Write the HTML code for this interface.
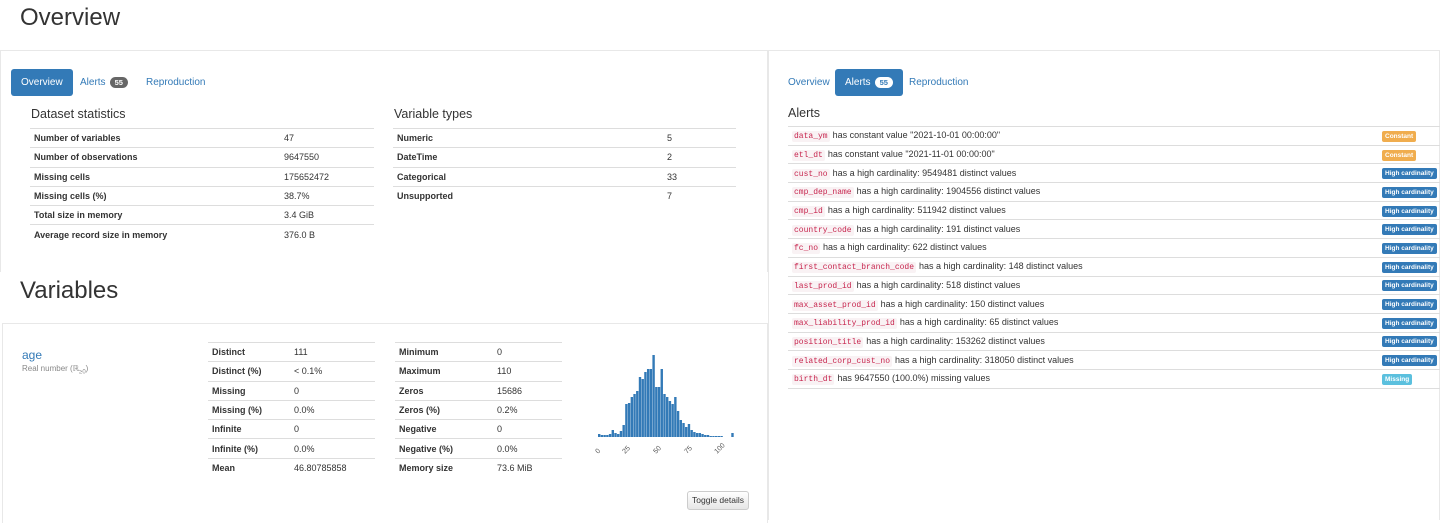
<!DOCTYPE html><html><head><meta charset="utf-8"><style>
*{margin:0;padding:0;box-sizing:border-box}
body{width:1440px;height:517px;background:#fff;font-family:"Liberation Sans",sans-serif;font-size:9.5px;color:#333;position:relative;overflow:hidden}
.a{position:absolute}
h1{position:absolute;font-weight:400;font-size:24px;color:#333}
.box{position:absolute;border:1px solid #e8e8e8;border-bottom:none}
.tab{position:absolute;height:27px;line-height:27px;font-size:10px;color:#337ab7;padding:0 10px;border-radius:3px}
.tab.on{background:#337ab7;color:#fff}
.bd{display:inline-block;background:#777;color:#fff;font-weight:700;font-size:7.5px;border-radius:8px;padding:0 5px;line-height:11px;margin-left:4px}
.on .bd{background:#fff;color:#337ab7}
h3{position:absolute;font-weight:400;font-size:12.5px;color:#333}
table{position:absolute;border-collapse:collapse}
td{border-top:1px solid #ddd;height:19.3px;padding:0 4px;font-size:9px;vertical-align:middle}
td.k{font-weight:700}
.al td{height:18.7px}
.al td.b{width:61px;padding:0 0 0 3px}
code{font-family:"Liberation Mono",monospace;font-size:8px;color:#c7254e;background:#f9f2f4;padding:1px 2px;border-radius:2px;margin-right:3px}
.lb{display:inline-block;font-size:6.5px;font-weight:700;color:#fff;padding:1px 3px;border-radius:2px;line-height:9px}
.c{background:#f0ad4e}.h{background:#337ab7}.m{background:#5bc0de}
</style></head><body>
<h1 style="left:20px;top:4px">Overview</h1>
<div class="box" style="left:0;top:50px;width:768px;height:222px"></div>
<div class="tab on" style="left:11px;top:69px">Overview</div>
<div class="tab" style="left:70px;top:69px">Alerts<span class="bd" style="background:#666">55</span></div>
<div class="tab" style="left:136px;top:69px">Reproduction</div>
<h3 style="left:31px;top:107px">Dataset statistics</h3>
<table style="left:30px;top:128px;width:344px">
<tr><td class="k" style="width:250px">Number of variables</td><td>47</td></tr>
<tr><td class="k">Number of observations</td><td>9647550</td></tr>
<tr><td class="k">Missing cells</td><td>175652472</td></tr>
<tr><td class="k">Missing cells (%)</td><td>38.7%</td></tr>
<tr><td class="k">Total size in memory</td><td>3.4 GiB</td></tr>
<tr><td class="k">Average record size in memory</td><td>376.0 B</td></tr>
</table>
<h3 style="left:394px;top:107px">Variable types</h3>
<table style="left:393px;top:128px;width:343px">
<tr><td class="k" style="width:270px">Numeric</td><td>5</td></tr>
<tr><td class="k">DateTime</td><td>2</td></tr>
<tr><td class="k">Categorical</td><td>33</td></tr>
<tr><td class="k">Unsupported</td><td>7</td></tr>
</table>
<h1 style="left:20px;top:277px">Variables</h1>
<div class="box" style="left:2px;top:323px;width:766px;height:200px"></div>
<div class="a" style="left:22px;top:348px;font-size:12px;color:#337ab7">age</div>
<div class="a" style="left:22px;top:364px;font-size:8px;color:#888">Real number (ℝ<sub style="font-size:6px">≥0</sub>)</div>
<table style="left:208px;top:342px;width:167px">
<tr><td class="k" style="width:82px">Distinct</td><td>111</td></tr>
<tr><td class="k">Distinct (%)</td><td>&lt; 0.1%</td></tr>
<tr><td class="k">Missing</td><td>0</td></tr>
<tr><td class="k">Missing (%)</td><td>0.0%</td></tr>
<tr><td class="k">Infinite</td><td>0</td></tr>
<tr><td class="k">Infinite (%)</td><td>0.0%</td></tr>
<tr><td class="k">Mean</td><td>46.80785858</td></tr>
</table>
<table style="left:395px;top:342px;width:167px">
<tr><td class="k" style="width:98px">Minimum</td><td>0</td></tr>
<tr><td class="k">Maximum</td><td>110</td></tr>
<tr><td class="k">Zeros</td><td>15686</td></tr>
<tr><td class="k">Zeros (%)</td><td>0.2%</td></tr>
<tr><td class="k">Negative</td><td>0</td></tr>
<tr><td class="k">Negative (%)</td><td>0.0%</td></tr>
<tr><td class="k">Memory size</td><td>73.6 MiB</td></tr>
</table>
<svg class="a" style="left:590px;top:350px" width="150" height="110">
<g fill="#337ab7" id="bars"></g>
<g font-size="7" fill="#555" font-family="Liberation Sans">
<text transform="translate(8,104) rotate(-45)">0</text>
<text transform="translate(35,104) rotate(-45)">25</text>
<text transform="translate(66,104) rotate(-45)">50</text>
<text transform="translate(97,104) rotate(-45)">75</text>
<text transform="translate(127,104) rotate(-45)">100</text>
</g>
</svg>
<script>
var h=[3,2,2,2,3,7,4,3,6,12,33,34,40,43,46,60,58,65,68,68,82,50,50,68,43,40,36,33,40,26,17,14,10,13,7,5,4,4,3,2,2,1,1,1,1,1,0,0,0,4];
var s='';for(var i=0;i<h.length;i++){s+='<rect x="'+(8+i*2.72)+'" y="'+(87-h[i])+'" width="2.4" height="'+h[i]+'"/>';}
document.getElementById('bars').innerHTML=s;
</script>
<div class="a" style="left:687px;top:491px;width:62px;height:19px;border:1px solid #ccc;border-radius:3px;background:linear-gradient(#fff,#e6e6e6);font-size:8.5px;line-height:17px;text-align:center">Toggle details</div>

<div class="box" style="left:768px;top:50px;width:672px;height:470px"></div>
<div class="tab" style="left:778px;top:69px">Overview</div>
<div class="tab on" style="left:835px;top:69px">Alerts<span class="bd">55</span></div>
<div class="tab" style="left:899px;top:69px">Reproduction</div>
<h3 style="left:788px;top:106px">Alerts</h3>
<table class="al" style="left:788px;top:126px;width:652px;border-bottom:1px solid #ddd">
<tr><td><code>data_ym</code>has constant value "2021-10-01 00:00:00"</td><td class="b"><span class="lb c">Constant</span></td></tr>
<tr><td><code>etl_dt</code>has constant value "2021-11-01 00:00:00"</td><td class="b"><span class="lb c">Constant</span></td></tr>
<tr><td><code>cust_no</code>has a high cardinality: 9549481 distinct values</td><td class="b"><span class="lb h">High cardinality</span></td></tr>
<tr><td><code>cmp_dep_name</code>has a high cardinality: 1904556 distinct values</td><td class="b"><span class="lb h">High cardinality</span></td></tr>
<tr><td><code>cmp_id</code>has a high cardinality: 511942 distinct values</td><td class="b"><span class="lb h">High cardinality</span></td></tr>
<tr><td><code>country_code</code>has a high cardinality: 191 distinct values</td><td class="b"><span class="lb h">High cardinality</span></td></tr>
<tr><td><code>fc_no</code>has a high cardinality: 622 distinct values</td><td class="b"><span class="lb h">High cardinality</span></td></tr>
<tr><td><code>first_contact_branch_code</code>has a high cardinality: 148 distinct values</td><td class="b"><span class="lb h">High cardinality</span></td></tr>
<tr><td><code>last_prod_id</code>has a high cardinality: 518 distinct values</td><td class="b"><span class="lb h">High cardinality</span></td></tr>
<tr><td><code>max_asset_prod_id</code>has a high cardinality: 150 distinct values</td><td class="b"><span class="lb h">High cardinality</span></td></tr>
<tr><td><code>max_liability_prod_id</code>has a high cardinality: 65 distinct values</td><td class="b"><span class="lb h">High cardinality</span></td></tr>
<tr><td><code>position_title</code>has a high cardinality: 153262 distinct values</td><td class="b"><span class="lb h">High cardinality</span></td></tr>
<tr><td><code>related_corp_cust_no</code>has a high cardinality: 318050 distinct values</td><td class="b"><span class="lb h">High cardinality</span></td></tr>
<tr><td><code>birth_dt</code>has 9647550 (100.0%) missing values</td><td class="b"><span class="lb m">Missing</span></td></tr>
</table>
</body></html>
